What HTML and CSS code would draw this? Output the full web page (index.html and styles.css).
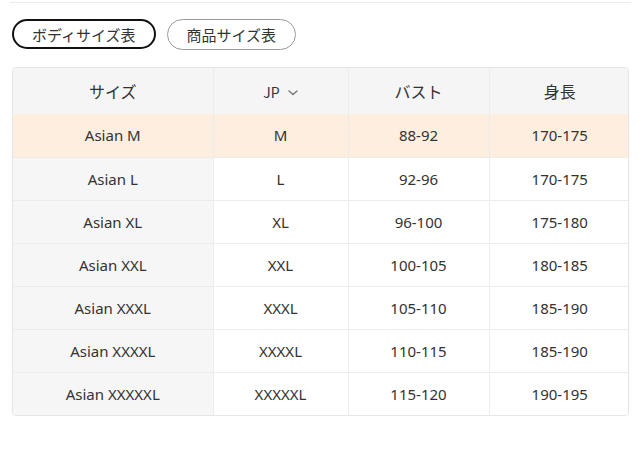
FILE: index.html
```html
<!DOCTYPE html>
<html lang="ja">
<head>
<meta charset="utf-8">
<link rel="stylesheet" href="styles.css">
</head>
<body>
<div class="page">
  <div class="top-rule"></div>
  <div class="tabs">
    <button class="tab tab-active">ボディサイズ表</button>
    <button class="tab">商品サイズ表</button>
  </div>
  <div class="table-wrap">
    <table class="size-table">
      <colgroup>
        <col class="c1"><col class="c2"><col class="c3"><col class="c4">
      </colgroup>
      <thead>
        <tr>
          <th>サイズ</th>
          <th><span class="jp">JP<svg class="chev" width="10" height="6" viewBox="0 0 10 6"><path d="M1 1 L5 4.6 L9 1" fill="none" stroke="#777" stroke-width="1.4" stroke-linecap="round" stroke-linejoin="round"/></svg></span></th>
          <th>バスト</th>
          <th>身長</th>
        </tr>
      </thead>
      <tbody>
        <tr class="hl"><td>Asian M</td><td>M</td><td>88-92</td><td>170-175</td></tr>
        <tr><td>Asian L</td><td>L</td><td>92-96</td><td>170-175</td></tr>
        <tr><td>Asian XL</td><td>XL</td><td>96-100</td><td>175-180</td></tr>
        <tr><td>Asian XXL</td><td>XXL</td><td>100-105</td><td>180-185</td></tr>
        <tr><td>Asian XXXL</td><td>XXXL</td><td>105-110</td><td>185-190</td></tr>
        <tr><td>Asian XXXXL</td><td>XXXXL</td><td>110-115</td><td>185-190</td></tr>
        <tr><td>Asian XXXXXL</td><td>XXXXXL</td><td>115-120</td><td>190-195</td></tr>
      </tbody>
    </table>
  </div>
</div>
</body>
</html>
```

FILE: styles.css
```css
* { box-sizing: border-box; }
html, body { margin: 0; padding: 0; background: #fff; }
body {
  font-family: "Noto Sans", "Noto Sans CJK JP", sans-serif;
  color: #333;
}
.page {
  width: 640px;
  padding: 0 11px 0 12px;
}
.top-rule {
  height: 3px;
  margin: 0 -2px;
  border-bottom: 1px solid #ececec;
}
.tabs {
  display: flex;
  gap: 11px;
  padding-top: 16px;
  height: 64px;
}
.tab {
  height: 31px;
  padding: 0 19px;
  border: 1px solid #9a9a9a;
  border-radius: 16px;
  background: #fff;
  font-family: "Noto Sans CJK JP", sans-serif;
  font-size: 15px;
  color: #333;
  line-height: 1;
}
.tab-active {
  height: 30px;
  border: 2px solid #111;
  padding: 0 18px;
}
.table-wrap {
  width: 617px;
  border: 1px solid #e6e6e6;
  border-radius: 4px;
  overflow: hidden;
  box-shadow: 0 1px 2px rgba(0,0,0,0.06);
}
.size-table {
  width: 100%;
  border-collapse: collapse;
  table-layout: fixed;
  font-size: 15px;
}
.c1 { width: 200px; }
.c2 { width: 135px; }
.c3 { width: 141px; }
.c4 { width: 141px; }
.size-table th, .size-table td {
  text-align: center;
  vertical-align: middle;
  border-left: 1px solid #ececec;
  border-top: 1px solid #ececec;
  padding: 0;
  color: #333;
  font-weight: 400;
}
.size-table th:first-child, .size-table td:first-child { border-left: none; }
.size-table thead th {
  height: 46px;
  background: #f5f5f5;
  border-top: none;
  font-family: "Noto Sans CJK JP", sans-serif;
  font-size: 16px;
}
.size-table td { height: 43px; background: #fff; }
.size-table td:first-child { background: #f6f6f6; }
.size-table tr.hl td { background: #fdeee0; border-top: none; }
.jp { display: inline-flex; align-items: center; gap: 8px; font-size: 14px; }
.chev { display: block; margin-top: 1px; }
```
